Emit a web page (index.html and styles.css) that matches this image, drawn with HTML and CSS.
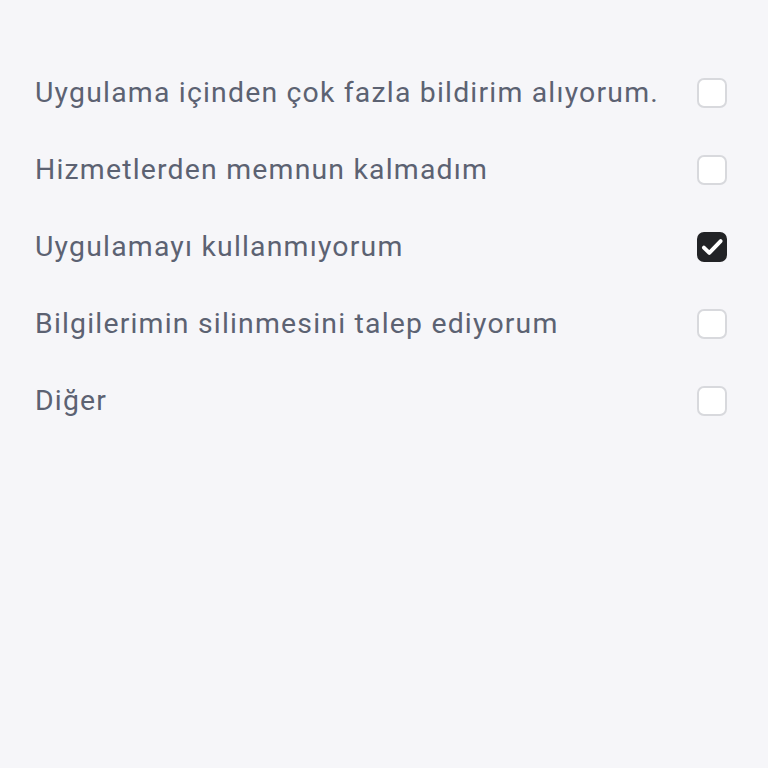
FILE: index.html
```html
<!DOCTYPE html>
<html lang="tr">
<head>
<meta charset="utf-8">
<title>Hesap silme nedeni</title>
<link rel="stylesheet" href="styles.css">
</head>
<body>
<ul class="reasons">
  <li class="reason">
    <span class="reason-label">Uygulama içinden çok fazla bildirim alıyorum.</span>
    <span class="check"></span>
  </li>
  <li class="reason">
    <span class="reason-label">Hizmetlerden memnun kalmadım</span>
    <span class="check"></span>
  </li>
  <li class="reason">
    <span class="reason-label">Uygulamayı kullanmıyorum</span>
    <span class="check is-checked">
      <svg viewBox="0 0 24 24" width="26" height="26"><path d="M4.5 12.5l5 5L20 6.5" fill="none" stroke="#fff" stroke-width="3.6" stroke-linecap="round" stroke-linejoin="round"/></svg>
    </span>
  </li>
  <li class="reason">
    <span class="reason-label">Bilgilerimin silinmesini talep ediyorum</span>
    <span class="check"></span>
  </li>
  <li class="reason">
    <span class="reason-label">Diğer</span>
    <span class="check"></span>
  </li>
</ul>
</body>
</html>
```
FILE: styles.css
```css
html, body {
  margin: 0;
  padding: 0;
  background: #f6f6f9;
  height: 100%;
}

body {
  font-family: Roboto, "Noto Sans", sans-serif;
  color: #5c6272;
}

.reasons {
  list-style: none;
  margin: 0;
  padding: 54px 41px 0 35px;
  display: flex;
  flex-direction: column;
}

.reason {
  display: flex;
  align-items: center;
  justify-content: space-between;
  height: 77px;
}

.reason-label {
  font-size: 28.4px;
  letter-spacing: 1.2px;
}

.check {
  width: 26px;
  height: 26px;
  border: 2px solid #d8d9dd;
  border-radius: 7px;
  background: #fff;
  display: flex;
  align-items: center;
  justify-content: center;
  flex: none;
}

.check.is-checked {
  background: #222326;
  border-color: #222326;
}
```
